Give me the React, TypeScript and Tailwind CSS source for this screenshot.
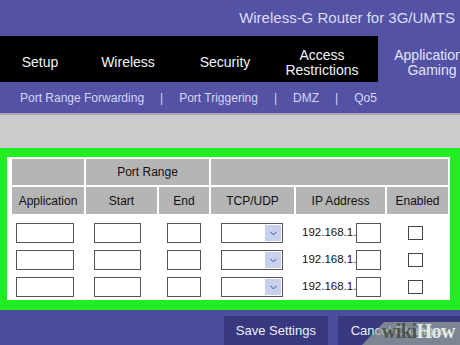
import { ChevronDown } from 'lucide-react';

const NAV = [
  { label: 'Setup', w: 'w-[80px]' },
  { label: 'Wireless', w: 'w-[96px]' },
  { label: 'Security', w: 'w-[98px]' },
];

const SUB = ['Port Range Forwarding', 'Port Triggering', 'DMZ', 'Qo5'];

const GRID = 'grid grid-cols-[72px_71px_50px_83px_89px_61px] gap-x-[2px]';

function Row() {
  return (
    <div className={`${GRID} h-[20px] items-center`}>
      <div className="pl-[4px]">
        <div className="h-[20px] w-[58px] border border-[#555] bg-white" />
      </div>
      <div className="pl-[8px]">
        <div className="h-[20px] w-[47px] border border-[#555] bg-white" />
      </div>
      <div className="pl-[8px]">
        <div className="h-[20px] w-[34px] border border-[#555] bg-white" />
      </div>
      <div className="pl-[10px]">
        <div className="flex h-[20px] w-[62px] justify-end border border-[#555] bg-white p-[1px]">
          <div className="flex w-[16px] items-center justify-center bg-[#c7d1ee]">
            <ChevronDown size={11} strokeWidth={2} className="text-[#2b3f8c]" />
          </div>
        </div>
      </div>
      <div className="flex items-center pl-[6px] text-[11.5px] text-[#111]">
        <span>192.168.1.</span>
        <div className="h-[20px] w-[25px] border border-[#555] bg-white" />
      </div>
      <div className="flex justify-center pr-[4px]">
        <div className="h-[14px] w-[15px] border border-[#444] bg-white" />
      </div>
    </div>
  );
}

export default function App() {
  return (
    <div
      className="relative h-[345px] w-[460px] overflow-hidden bg-[#4d4d9d]"
      style={{ fontFamily: '"Liberation Sans", Arial, sans-serif' }}
    >
      <div className="flex h-[36px] items-center justify-end bg-[#5352a5] pr-[5px] text-[15px] text-[#dcdcf2]">
        Wireless-G Router for 3G/UMTS
      </div>

      <div className="flex h-[46px] bg-black text-[14px] leading-[15px] text-[#f2f2f2]">
        {NAV.map((n) => (
          <div key={n.label} className={`flex ${n.w} shrink-0 items-center justify-center pt-[7px]`}>
            {n.label}
          </div>
        ))}
        <div className="flex w-[104px] shrink-0 items-center justify-center pr-[8px] pt-[7px] text-center">
          Access
          <br />
          Restrictions
        </div>
        <div className="flex w-[108px] shrink-0 items-center justify-center bg-[#5352a5] pt-[8px] text-center text-[#e4e4f6]">
          Applications
          <br />
          Gaming
        </div>
      </div>

      <div className="flex h-[31px] items-center gap-[16px] bg-[#5352a5] pl-[20px] text-[12px] text-[#d6d6f2]">
        {SUB.map((s, i) => (
          <div key={s} className="flex items-center gap-[16px]">
            {i > 0 && <span>|</span>}
            <span>{s}</span>
          </div>
        ))}
      </div>

      <div className="h-[35px] border-t-[2px] border-[#a9a9b4] bg-[#cbcbcb]" />

      <div className="h-[162px] border-b-[10px] border-l-[7px] border-r-[10px] border-t-[9px] border-[#22ec22] bg-white pl-[5px] pt-[2px]">
        <div className={`${GRID} gap-y-[2px] text-[12px] text-[#111]`}>
          <div className="h-[26px] bg-[#b5b5b5]" />
          <div className="col-span-2 flex h-[26px] items-center justify-center bg-[#b5b5b5]">
            Port Range
          </div>
          <div className="col-span-3 h-[26px] bg-[#b5b5b5]" />
          {['Application', 'Start', 'End', 'TCP/UDP', 'IP Address', 'Enabled'].map((h) => (
            <div key={h} className="flex h-[27px] items-center justify-center bg-[#b5b5b5]">
              {h}
            </div>
          ))}
        </div>
        <div className="flex flex-col gap-[7px] pt-[9px]">
          <Row />
          <Row />
          <Row />
        </div>
      </div>

      <div className="flex gap-[10px] pl-[224px] pt-[6px] text-[13px] text-[#eeeefa]">
        <div className="flex h-[30px] w-[111px] items-center justify-center bg-[#38387f]">
          Save Settings
        </div>
        <div className="flex h-[30px] w-[130px] items-center bg-[#38387f] pl-[13px]">
          Cancel Changes
        </div>
      </div>

      <svg className="absolute bottom-0 right-0" width="98" height="23" viewBox="0 0 98 23">
        <polygon points="0,23 22,0 98,0 98,23" fill="#9aa79a" fillOpacity="0.7" />
      </svg>
      <div
        className="absolute bottom-[4px] right-[5px] text-[20px] font-bold leading-none tracking-[-0.5px]"
        style={{ fontFamily: '"Liberation Serif", serif' }}
      >
        <span className="text-[#4d554d]">wiki</span>
        <span className="text-[#e4ebe4]">How</span>
      </div>
    </div>
  );
}
